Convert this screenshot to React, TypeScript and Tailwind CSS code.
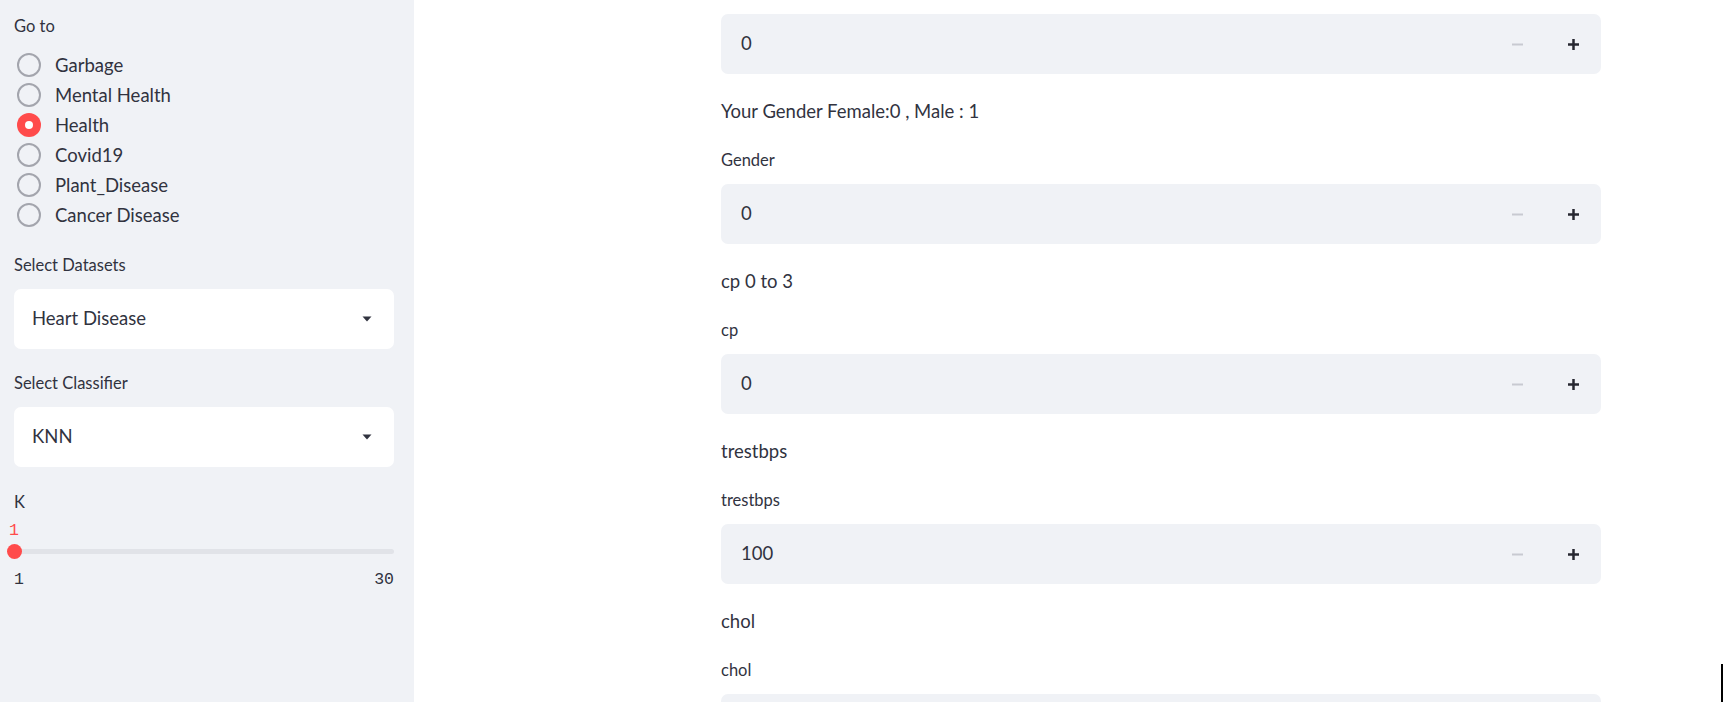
import React from 'react';

const FONT = { fontFamily: '"Source Sans Pro", Lato, "Noto Sans", sans-serif' };
const MONO = { fontFamily: '"Liberation Mono", monospace' };

const PAGES = ['Garbage', 'Mental Health', 'Health', 'Covid19', 'Plant_Disease', 'Cancer Disease'];

type Field = { note: string; label: string; value: string };
const FIELDS: Field[] = [
  { note: 'Your Gender Female:0 , Male : 1', label: 'Gender', value: '0' },
  { note: 'cp 0 to 3', label: 'cp', value: '0' },
  { note: 'trestbps', label: 'trestbps', value: '100' },
  { note: 'chol', label: 'chol', value: '' },
];

function Caret() {
  return (
    <svg width="10" height="6" viewBox="0 0 10 6" className="shrink-0">
      <path d="M0.5 0.5 L9.5 0.5 L5 5.5 Z" fill="#31333f" />
    </svg>
  );
}

function Select({ value }: { value: string }) {
  return (
    <div className="flex h-[60px] items-center justify-between rounded-[7px] bg-white pl-[18px] pr-[22px]">
      <span className="text-[18.5px] text-[#31333f]">{value}</span>
      <Caret />
    </div>
  );
}

function NumberInput({ value }: { value: string }) {
  return (
    <div className="flex h-[60px] w-[880px] shrink-0 items-stretch rounded-[7px] bg-[#f0f2f6]">
      <div className="flex flex-1 items-center pl-[20px] text-[18.5px] text-[#31333f]">{value}</div>
      <div className="flex w-[56px] items-center justify-center">
        <svg width="11" height="11" viewBox="0 0 11 11">
          <rect x="0" y="4.5" width="11" height="2" fill="#c8cad1" />
        </svg>
      </div>
      <div className="flex w-[56px] items-center justify-center">
        <svg width="11" height="11" viewBox="0 0 11 11">
          <rect x="0" y="4.25" width="11" height="2.5" fill="#262730" />
          <rect x="4.25" y="0" width="2.5" height="11" fill="#262730" />
        </svg>
      </div>
    </div>
  );
}

function Sidebar() {
  return (
    <aside className="flex h-[702px] w-[414px] shrink-0 flex-col bg-[#f0f2f6] pl-[14px] pr-[20px] pt-[14px] text-[#31333f]">
      <div className="h-[24px] text-[16.5px] leading-[24px]">Go to</div>
      <div className="mt-[12px] flex flex-col">
        {PAGES.map((p) => {
          const on = p === 'Health';
          return (
            <div key={p} className="flex h-[30px] items-center gap-[14px] pl-[3px]">
              {on ? (
                <span className="flex h-[24px] w-[24px] items-center justify-center rounded-full bg-[#ff4b4b]">
                  <span className="h-[8px] w-[8px] rounded-full bg-white" />
                </span>
              ) : (
                <span className="h-[24px] w-[24px] rounded-full border-[2.5px] border-[#a3a5ad] bg-[#f0f2f6]" />
              )}
              <span className="text-[18.5px] leading-[30px]">{p}</span>
            </div>
          );
        })}
      </div>
      <div className="mt-[23px] h-[24px] text-[16.5px] leading-[24px]">Select Datasets</div>
      <div className="mt-[12px]">
        <Select value="Heart Disease" />
      </div>
      <div className="mt-[22px] h-[24px] text-[16.5px] leading-[24px]">Select Classifier</div>
      <div className="mt-[12px]">
        <Select value="KNN" />
      </div>
      <div className="mt-[23px] h-[24px] text-[16.5px] leading-[24px]">K</div>
      <div className="mt-[7px] flex h-[20px] items-center">
        <span className="-ml-[7px] w-[14px] text-center text-[16.5px] text-[#ff4b4b]" style={MONO}>
          1
        </span>
      </div>
      <div className="relative h-[20px]">
        <div className="absolute left-0 right-0 top-[8px] h-[5px] rounded-full bg-[#e1e3e8]" />
        <div className="absolute left-[-7px] top-[3px] h-[15px] w-[15px] rounded-full bg-[#ff4b4b]" />
      </div>
      <div className="mt-[9px] flex h-[20px] items-center justify-between text-[16.5px] text-[#31333f]" style={MONO}>
        <span>1</span>
        <span>30</span>
      </div>
    </aside>
  );
}

export default function App() {
  return (
    <div className="relative flex h-[702px] w-[1723px] overflow-hidden bg-white" style={FONT}>
      <Sidebar />
      <main className="flex flex-1 flex-col pl-[307px] pt-[14px] text-[#31333f]">
        <NumberInput value="0" />
        {FIELDS.map((f) => (
          <div key={f.label} className="flex flex-col">
            <div className="mt-[23px] h-[28px] text-[18.5px] leading-[28px]">{f.note}</div>
            <div className="mt-[23px] h-[24px] text-[16.5px] leading-[24px]">{f.label}</div>
            <div className="mt-[12px]">
              <NumberInput value={f.value} />
            </div>
          </div>
        ))}
      </main>
      <div className="absolute bottom-0 right-0 h-[38px] w-[2px] bg-black" />
    </div>
  );
}
